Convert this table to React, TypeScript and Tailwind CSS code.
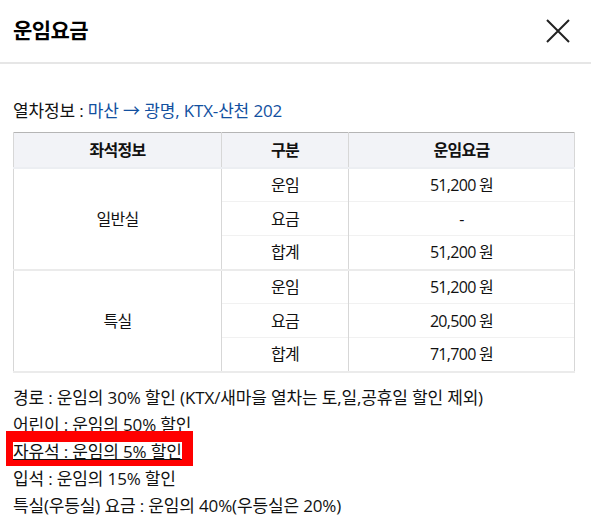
import React from 'react';

const FONT = { fontFamily: '"Open Sans", "Noto Sans CJK KR", sans-serif' };

type Row = { label: string; amount: string };

const groups: { seat: string; rows: Row[] }[] = [
  {
    seat: '일반실',
    rows: [
      { label: '운임', amount: '51,200 원' },
      { label: '요금', amount: '-' },
      { label: '합계', amount: '51,200 원' },
    ],
  },
  {
    seat: '특실',
    rows: [
      { label: '운임', amount: '51,200 원' },
      { label: '요금', amount: '20,500 원' },
      { label: '합계', amount: '71,700 원' },
    ],
  },
];

const notes = [
  '경로 : 운임의 30% 할인 (KTX/새마을 열차는 토,일,공휴일 할인 제외)',
  '어린이 : 운임의 50% 할인',
  '자유석 : 운임의 5% 할인',
  '입석 : 운임의 15% 할인',
  '특실(우등실) 요금 : 운임의 40%(우등실은 20%)',
];

const App: React.FC = () => {
  return (
    <div className="w-[591px] h-[519px] bg-white text-[#111] overflow-hidden" style={FONT}>
      {/* header */}
      <div className="h-[64px] flex items-center justify-between pl-[13px] pr-[21px] border-b-2 border-[#e6e6e6]">
        <h2 className="text-[21px] font-bold tracking-[-0.6px] text-black">운임요금</h2>
        <button className="w-6 h-6 text-[#222]">
          <svg viewBox="0 0 24 24" width="24" height="24" fill="none" stroke="currentColor" strokeWidth="2">
            <path d="M1 1 L23 23 M23 1 L1 23" />
          </svg>
        </button>
      </div>

      <div className="px-[13px] pt-[33px]">
        <p className="text-[17px] leading-[27px] tracking-[-0.15px]">
          열차정보 : <span className="text-[#12509f]">마산 → 광명, KTX-산천 202</span>
        </p>

        <table className="mt-[8px] w-[562px] border-collapse text-[16px] tracking-[-0.7px] text-center">
          <thead>
            <tr className="h-[35px] bg-[#f2f3f7] border-t border-[#b5b5b5] border-b-2 border-b-[#eceef2]">
              <th className="w-[208px] font-bold border-l border-[#d7d7d7]">좌석정보</th>
              <th className="w-[127px] font-bold border-l border-[#d7d7d7]">구분</th>
              <th className="font-bold border-x border-[#d7d7d7]">운임요금</th>
            </tr>
          </thead>
          <tbody>
            {groups.map((g, gi) =>
              g.rows.map((r, ri) => (
                <tr
                  key={`${gi}-${ri}`}
                  className={`h-[34px] ${ri === 2 ? 'border-b-2 border-[#ebebeb]' : 'border-b border-[#f1f1f1]'}`}
                >
                  {ri === 0 && (
                    <td rowSpan={3} className="border-l border-[#d7d7d7] border-b-2 border-b-[#ebebeb]">
                      {g.seat}
                    </td>
                  )}
                  <td className="border-l border-[#d7d7d7]">{r.label}</td>
                  <td className="border-x border-[#d7d7d7]">{r.amount}</td>
                </tr>
              ))
            )}
          </tbody>
        </table>

        <div className="mt-[11px] text-[17px] leading-[27px] tracking-[-0.15px]">
          {notes.map((n, i) =>
            i === 2 ? (
              <div key={i} className="relative">
                {/* red highlight box */}
                <div className="absolute left-[-7px] top-[-7px] w-[187px] h-[35px] bg-[#ff0000]" />
                <span className="relative inline-block">
                  <span className="absolute left-0 right-0 top-[4px] h-[17px] bg-white" />
                  <span className="relative underline underline-offset-[1px]">{n}</span>
                </span>
              </div>
            ) : (
              <div key={i}>{n}</div>
            )
          )}
        </div>
      </div>
    </div>
  );
};

export default App;
